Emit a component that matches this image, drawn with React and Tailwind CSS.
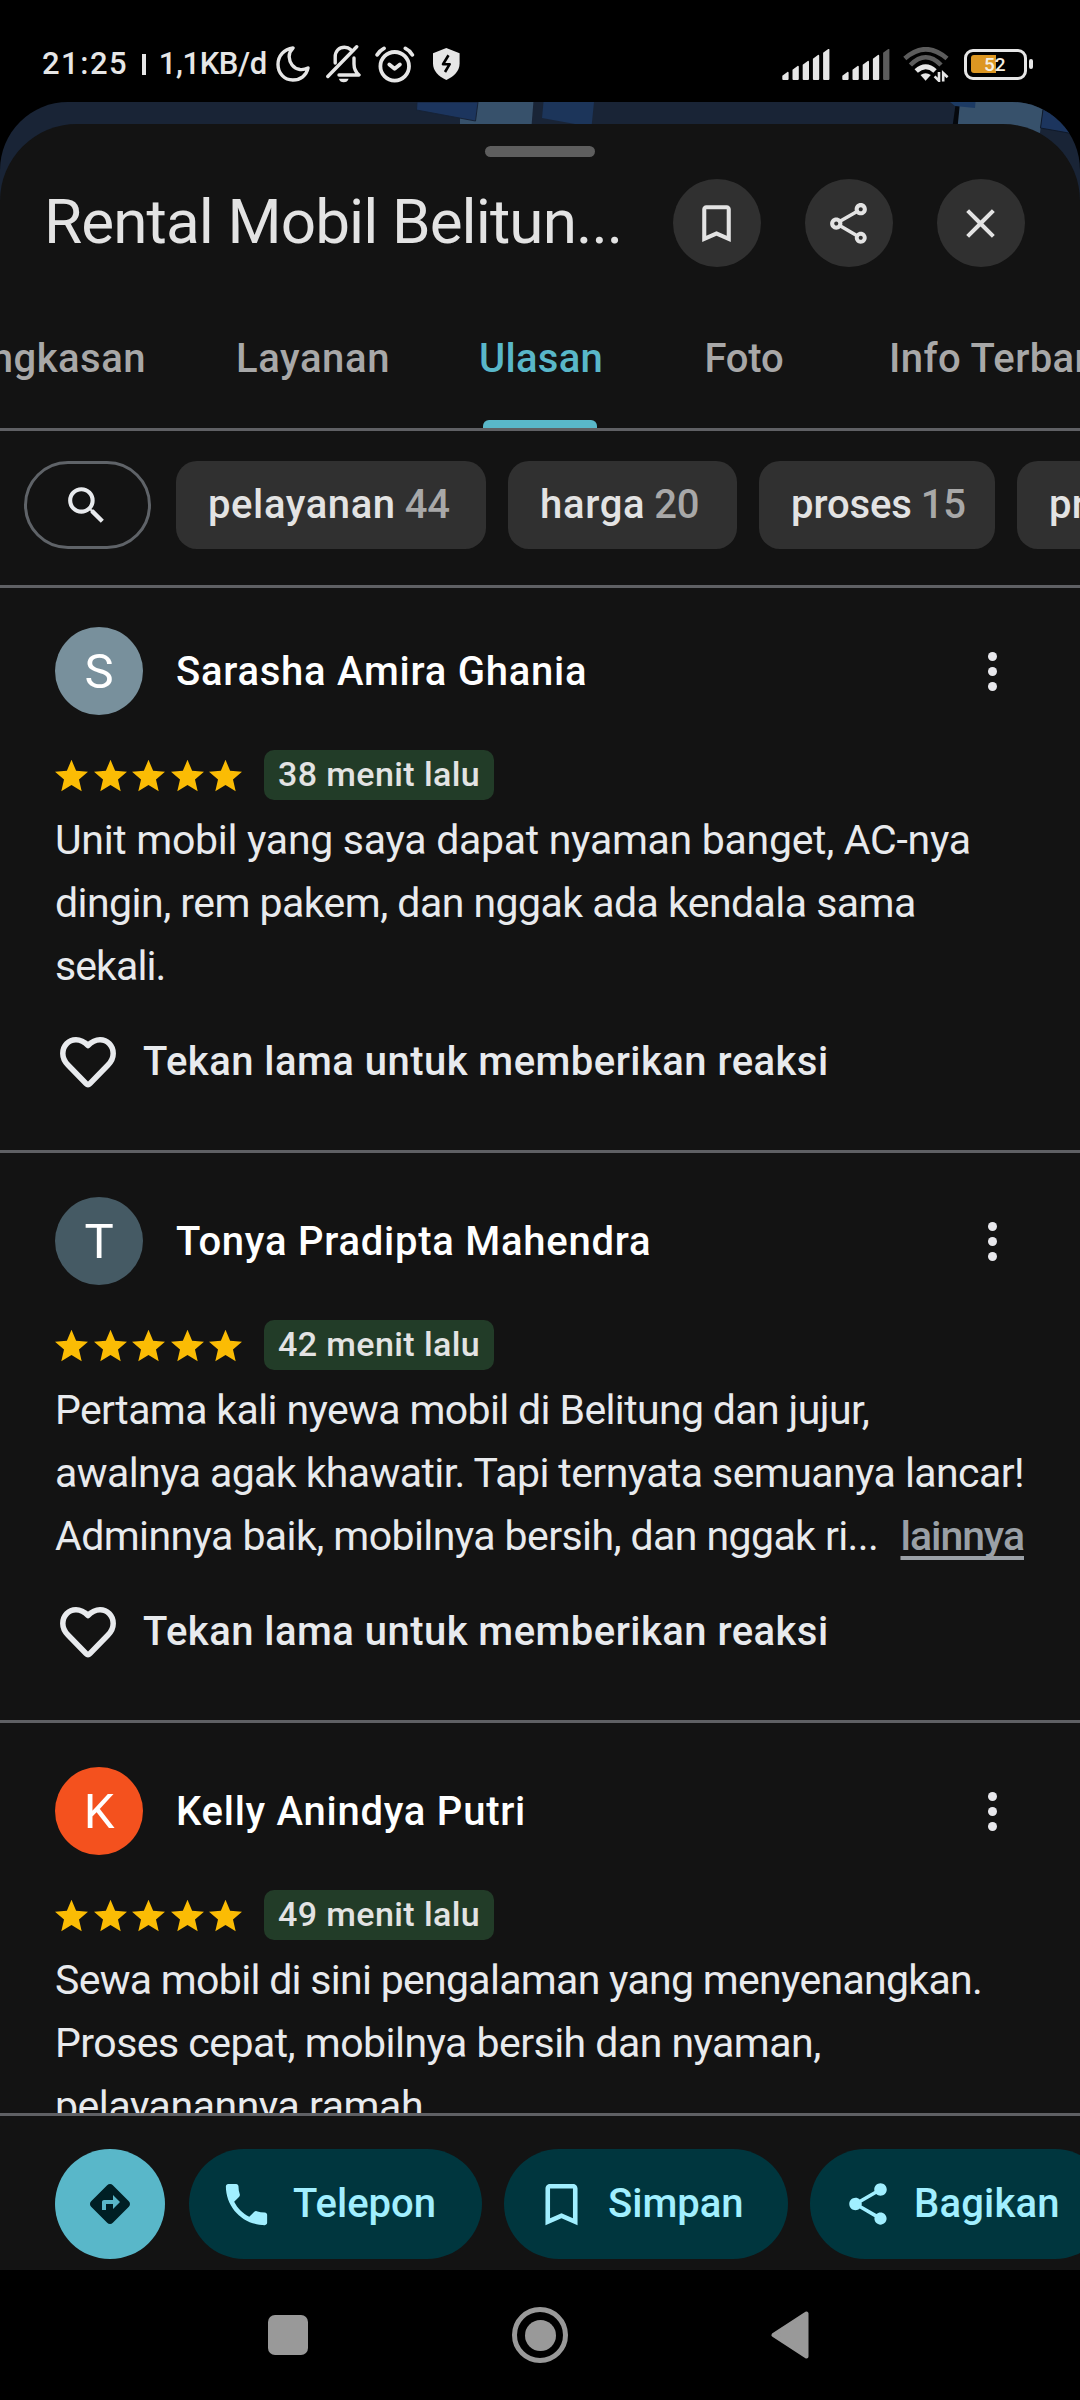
import { MdBookmarkBorder, MdOutlineShare, MdClose, MdSearch, MdPhone, MdShare, MdDirections } from 'react-icons/md';

const tabs = [
  { nombre: 'Ringkasan', clase: 'w-[191px] justify-end pr-[45px] tracking-[0.5px]' },
  { nombre: 'Layanan', clase: 'w-[244px] justify-center tracking-[0.6px]' },
  { nombre: 'Ulasan', clase: 'w-[212px] justify-center tracking-[0.3px]', activo: true },
  { nombre: 'Foto', clase: 'w-[194px] justify-center tracking-[-0.2px]' },
  { nombre: 'Info Terbaru', clase: 'pl-[48px] tracking-[0.4px]' },
];

const filtros = [
  { texto: 'pelayanan', total: 44, clase: 'w-[310px] tracking-[0.6px]' },
  { texto: 'harga', total: 20, clase: 'w-[229px] tracking-[0.7px]' },
  { texto: 'proses', total: 15, clase: 'w-[236px] tracking-[-0.1px]' },
  { texto: 'promo', total: 12, clase: 'w-[236px] tracking-[0.3px]' },
];

const resenas = [
  {
    nombre: 'Sarasha Amira Ghania',
    color: 'bg-[#78909c]',
    hace: '38 menit lalu',
    lineas: [
      { texto: 'Unit mobil yang saya dapat nyaman banget, AC-nya', clase: 'tracking-[-0.29px]' },
      { texto: 'dingin, rem pakem, dan nggak ada kendala sama', clase: 'tracking-[-0.54px]' },
      { texto: 'sekali.', clase: 'tracking-[-0.9px]' },
    ],
  },
  {
    nombre: 'Tonya Pradipta Mahendra',
    color: 'bg-[#455a64]',
    hace: '42 menit lalu',
    lineas: [
      { texto: 'Pertama kali nyewa mobil di Belitung dan jujur,', clase: 'tracking-[-0.63px]' },
      { texto: 'awalnya agak khawatir. Tapi ternyata semuanya lancar!', clase: 'tracking-[-0.58px]' },
      { texto: 'Adminnya baik, mobilnya bersih, dan nggak ri...', clase: 'tracking-[-0.58px]' },
    ],
    cortada: true,
  },
  {
    nombre: 'Kelly Anindya Putri',
    color: 'bg-[#f4511e]',
    hace: '49 menit lalu',
    lineas: [
      { texto: 'Sewa mobil di sini pengalaman yang menyenangkan.', clase: 'tracking-[-0.7px]' },
      { texto: 'Proses cepat, mobilnya bersih dan nyaman,', clase: 'tracking-[-0.53px]' },
      { texto: 'pelayanannya ramah', clase: 'tracking-[-0.45px]' },
    ],
  },
];

const alturas = [7.7, 13.7, 18.7, 24.7, 30.7];

function Senal({ activas }) {
  return (
    <svg width="48" height="31" viewBox="0 0 48 31">
      {alturas.map((h, i) => (
        <path
          key={h}
          d={`M${i * 10.2 + 0.3} 30 V${34.5 - h} l5.4 -4 q0.9 0 0.9 1 V30 q0 1 -1 1 h-4.3 q-1 0 -1 -1 Z`}
          fill={i < activas ? '#e6e6e6' : '#5c5c5c'}
        />
      ))}
    </svg>
  );
}

function BarraEstado() {
  return (
    <div className="flex h-[102px] items-center justify-between pl-[42px] pr-[47px] pt-[26px] text-[#e6e6e6]">
      <div className="flex items-center">
        <div className="flex w-[234px] items-center text-[31px] leading-9 font-medium">
          <span className="tracking-[1.5px]">21:25</span>
          <span className="ml-[14px] h-[21px] w-[3.5px] shrink-0 bg-[#e6e6e6]" />
          <span className="ml-[13px] tracking-[-0.4px]">1,1KB/d</span>
        </div>
        <svg width="34" height="36" viewBox="0 0 34 36" fill="none" stroke="currentColor" strokeWidth="3.4" strokeLinejoin="round">
          <path d="M17 2 C8 3 2 10 2 18.5 C2 27.5 8.5 34 16.8 34 C24.5 34 30.5 29.5 32 22 C29 23.5 26.5 23.8 24 23.5 C17 22.5 13.5 16.5 13.2 11 C13 7.5 14.5 4.5 17 2Z" />
        </svg>
        <svg className="ml-4" width="35" height="38" viewBox="0 0 35 38" fill="none" stroke="currentColor" strokeWidth="3.4" strokeLinecap="round">
          <path d="M30.7 1.8 L1.8 31.5" />
          <path d="M9.2 18 V12 C9.2 6 13 2.3 18.5 2.3 C21 2.3 23 3 24.5 4.5" />
          <path d="M28 13 V19 C28 24 29.5 27 33 30 H13" strokeLinejoin="round" />
          <path d="M12.8 33.8 H22.6 Q21.5 37.3 17.7 37.3 Q14 37.3 12.8 33.8Z" fill="currentColor" stroke="none" />
        </svg>
        <svg className="ml-[14px]" width="40" height="37" viewBox="0 0 40 37" fill="none" stroke="currentColor" strokeWidth="3.8" strokeLinecap="round">
          <circle cx="19.7" cy="20.3" r="14.3" />
          <path d="M2.2 8.8 Q4.7 4.6 9 2.4 M30.4 2.4 Q35 4.6 37.3 8.8" />
          <path d="M14.3 18.5 L19.6 22.8 L24.9 18.5" strokeLinejoin="round" />
        </svg>
        <svg className="ml-[18px]" width="27" height="32" viewBox="0 0 27 32">
          <path d="M13.3 0 L26.6 5.2 V15.5 C26.6 23 21 28.5 13.3 32 C5.6 28.5 0 23 0 15.5 V5.2Z" fill="currentColor" />
          <path d="M15.5 7.2 L10 16.2 H16.7 L12 24" fill="none" stroke="#000" strokeWidth="2.6" strokeLinejoin="round" />
        </svg>
      </div>
      <div className="flex items-center">
        <Senal activas={5} />
        <div className="ml-3"><Senal activas={4} /></div>
        <svg className="ml-[13px]" width="46" height="35" viewBox="0 0 46 35" fill="none">
          <path d="M1.8 11.5 Q22.7 -7 44 11.5" stroke="#5c5c5c" strokeWidth="4.6" />
          <path d="M7.4 18 Q22.7 2.5 38 18" stroke="#5c5c5c" strokeWidth="4.6" />
          <path d="M13.2 24 Q22.7 15.5 32 24" stroke="#e6e6e6" strokeWidth="5" />
          <path d="M17.5 28 Q22.6 24.5 27.8 28 L22.6 33.8Z" fill="#e6e6e6" />
          <path d="M36 25 V33.8 L31.6 29.4 M40.2 34.5 V26 L44.6 30.2" stroke="#e6e6e6" strokeWidth="2.6" />
        </svg>
        {/* batería al 52% */}
        <div className="ml-[15px] flex h-[31px] w-[63px] items-center rounded-[9px] border-[3.4px] border-[#e6e6e6] px-1">
          <div className="relative h-[18px] w-[25px] rounded-l-[3px] bg-[#dd9722]">
            <span className="absolute left-[13px] top-0 text-[19px] leading-[19px] font-medium text-[#f5efe2]">52</span>
          </div>
        </div>
        <span className="ml-[2px] h-[10px] w-1 rounded-sm bg-[#e6e6e6]" />
      </div>
    </div>
  );
}

function FondoMapa() {
  return (
    <svg className="absolute left-0 top-0" width="1080" height="90" viewBox="0 102 1080 90">
      <path d="M478 102 H533.4 L531.5 126 H460 V118Z" fill="#37516b" />
      <path d="M417 102 H478 L475.5 121 L416.5 110Z" fill="#1c355e" stroke="#172337" />
      <path d="M543.5 102 H594 L591.5 127 L542 118Z" fill="#1c355a" />
      <path d="M955.5 105 H962 L957 130 H952Z" fill="#05080d" />
      <path d="M960 102 H1044 L1040 133 L957.7 126Z" fill="#37516b" />
      <path d="M950 102 H975.5 L975 108 L955 106Z" fill="#1c3a63" />
      <path d="M1044 102 H1080 V135 L1040.5 128Z" fill="#1c355e" stroke="#101a2a" />
    </svg>
  );
}

function BotonCirculo({ children }) {
  return (
    <button className="flex size-[88px] shrink-0 items-center justify-center rounded-full bg-[#303030] pr-[2px] text-[#e3e3e3]">
      {children}
    </button>
  );
}

function Resena({ resena, primera }) {
  return (
    <article className={`shrink-0 border-b-[3px] border-[#5f6064] px-[55px] pb-[63px] ${primera ? 'pt-[39px]' : 'pt-[44px]'}`}>
      <div className="flex items-center">
        <div className={`flex size-[88px] items-center justify-center rounded-full text-[49px] leading-none text-white ${resena.color}`}>
          {resena.nombre[0]}
        </div>
        <h3 className="ml-[33px] pt-[2px] text-[40px] leading-[48px] font-medium tracking-[0.75px] text-white">{resena.nombre}</h3>
        <button className="ml-auto mr-[28px] flex flex-col gap-[6px]">
          {[0, 1, 2].map(i => <span key={i} className="size-[9px] rounded-full bg-[#e8e8ec]" />)}
        </button>
      </div>

      <div className="mt-[35px] flex h-[50px] items-center">
        <div className="flex gap-[5.5px]">
          {[1, 2, 3, 4, 5].map(i => (
            <svg key={i} width="33" height="33" viewBox="2 2 20 19" fill="#fbbc04">
              <path d="M12 17.27 18.18 21l-1.64-7.03L22 9.24l-7.19-.61L12 2 9.19 8.63 2 9.24l5.46 4.73L5.82 21z" />
            </svg>
          ))}
        </div>
        <span className="ml-[22px] flex h-[50px] items-center rounded-[10px] bg-[#223c28] px-[14px] pb-px text-[34px] font-medium tracking-[0.4px] text-[#e3e3e3]">
          {resena.hace}
        </span>
      </div>

      <div className="mt-[9px] text-[41px] leading-[63px] text-[#e8eaed]">
        {resena.lineas.map((l, i) => (
          <div key={i} className="flex justify-between whitespace-nowrap">
            <span className={l.clase}>{l.texto}</span>
            {resena.cortada && i === 2 && (
              <a className="mr-px font-medium tracking-[-1px] text-[#9aa0a6] underline decoration-4 underline-offset-[6px] [text-decoration-skip-ink:none]">lainnya</a>
            )}
          </div>
        ))}
      </div>

      <div className="mt-[39px] flex h-[50px] items-center gap-[27px] pl-[5px] text-[#e8eaed]">
        <svg width="56" height="51" viewBox="0 0 56 51" fill="none" stroke="currentColor" strokeWidth="5.5" strokeLinejoin="round">
          <path d="M28 8.5 C24 4.5 20 2.8 16 2.8 C8.5 2.8 2.8 8.8 2.8 16.5 C2.8 21.5 5 25 8 28 L26 46.5 Q28 48.5 30 46.5 L48 28 C51 25 53.2 21.5 53.2 16.5 C53.2 8.8 47.5 2.8 40 2.8 C36 2.8 32 4.5 28 8.5Z" />
        </svg>
        <span className="text-[40px] leading-[48px] font-medium tracking-[0.46px]">Tekan lama untuk memberikan reaksi</span>
      </div>
    </article>
  );
}

export default function App() {
  return (
    <div className="flex h-[2400px] w-[1080px] flex-col overflow-hidden bg-black font-[Roboto,'Liberation_Sans',sans-serif]">
      <BarraEstado />

      <div className="relative flex min-h-0 flex-1 flex-col overflow-hidden rounded-t-[68px] bg-[#192436] pt-[22px]">
        <FondoMapa />
        <div className="relative flex min-h-0 flex-1 flex-col rounded-t-[77px] bg-[#131313] pt-[22px]">
          <div className="h-[11px] w-[110px] shrink-0 self-center rounded-full bg-[#5e5e5e]" />

          {/* cabecera */}
          <div className="mt-[22px] flex shrink-0 items-center pl-[44px] pr-[55px]">
            <h1 className="flex-1 pb-[2px] text-[62px] leading-[72px] tracking-[-0.9px] whitespace-nowrap text-[#e3e3e3]">Rental Mobil Belitun...</h1>
            <div className="flex gap-11">
              <BotonCirculo><MdBookmarkBorder size={49} /></BotonCirculo>
              <BotonCirculo><MdOutlineShare size={49} /></BotonCirculo>
              <BotonCirculo><MdClose size={49} /></BotonCirculo>
            </div>
          </div>

          <nav className="flex h-[164px] shrink-0 overflow-hidden border-b-[3px] border-[#5f6064]">
            {tabs.map(t => (
              <div key={t.nombre} className={`relative flex shrink-0 pt-[68px] text-[40px] leading-[48px] font-medium ${t.activo ? 'text-[#59b7c9]' : 'text-[#a8a8a8]'} ${t.clase}`}>
                {t.nombre}
                {t.activo && <span className="absolute bottom-0 left-[48px] h-2 w-[114px] rounded-t-[6px] bg-[#59b7c9]" />}
              </div>
            ))}
          </nav>

          <div className="flex h-[157px] shrink-0 gap-[22px] overflow-hidden border-b-[3px] border-[#5f6064] pl-6 pt-[30px]">
            <button className="mr-[3px] flex h-[88px] w-[127px] shrink-0 items-center justify-center rounded-full border-[3px] border-[#5f6368] pr-[2px] text-[#e8eaed]">
              <MdSearch size={49} />
            </button>
            {filtros.map(f => (
              <button key={f.texto} className={`flex h-[88px] shrink-0 items-center gap-[9px] rounded-[21px] bg-[#303030] pl-8 text-[40px] leading-[48px] font-medium text-[#e3e3e3] ${f.clase}`}>
                {f.texto}
                <span className="tracking-[-0.3px] text-[#a8a8a8]">{f.total}</span>
              </button>
            ))}
          </div>

          <div className="flex min-h-0 flex-1 flex-col overflow-hidden">
            {resenas.map((r, i) => <Resena key={r.nombre} resena={r} primera={i === 0} />)}
          </div>

          {/* acciones */}
          <div className="flex h-[157px] shrink-0 gap-[22px] overflow-hidden border-t-[3px] border-[#5f6064] pl-[55px] pt-[33px] text-[40px] leading-[48px] font-medium text-[#a1efff]">
            <button className="mr-[2px] flex size-[110px] shrink-0 items-center justify-center rounded-full bg-[#59b7c9] text-[#001f24]">
              <MdDirections size={48} />
            </button>
            <button className="flex h-[110px] w-[293px] shrink-0 items-center rounded-full bg-[#00363e] pl-[30px]">
              <MdPhone size={55} />
              <span className="ml-[19px]">Telepon</span>
            </button>
            <button className="flex h-[110px] w-[284px] shrink-0 items-center rounded-full bg-[#00363e] pl-[30px]">
              <MdBookmarkBorder size={55} />
              <span className="ml-[19px]">Simpan</span>
            </button>
            <button className="flex h-[110px] w-[300px] shrink-0 items-center rounded-full bg-[#00363e] pl-[33px]">
              <MdShare size={50} />
              <span className="ml-[21px] tracking-[0.2px]">Bagikan</span>
            </button>
          </div>
        </div>
      </div>

      <div className="flex h-[130px] shrink-0 items-center pl-[268px] text-[#999999]">
        <div className="h-10 w-10 rounded-[7px] bg-[#999999]" />
        <div className="ml-[204px] flex size-[56px] items-center justify-center rounded-full border-[5px] border-[#999999]">
          <div className="size-[31px] rounded-full bg-[#999999]" />
        </div>
        <svg className="ml-[203px]" width="38" height="48" viewBox="0 0 38 48" fill="currentColor" stroke="currentColor" strokeWidth="4" strokeLinejoin="round">
          <path d="M35.5 2.5 V45.5 L2.5 24Z" />
        </svg>
      </div>
    </div>
  );
}
